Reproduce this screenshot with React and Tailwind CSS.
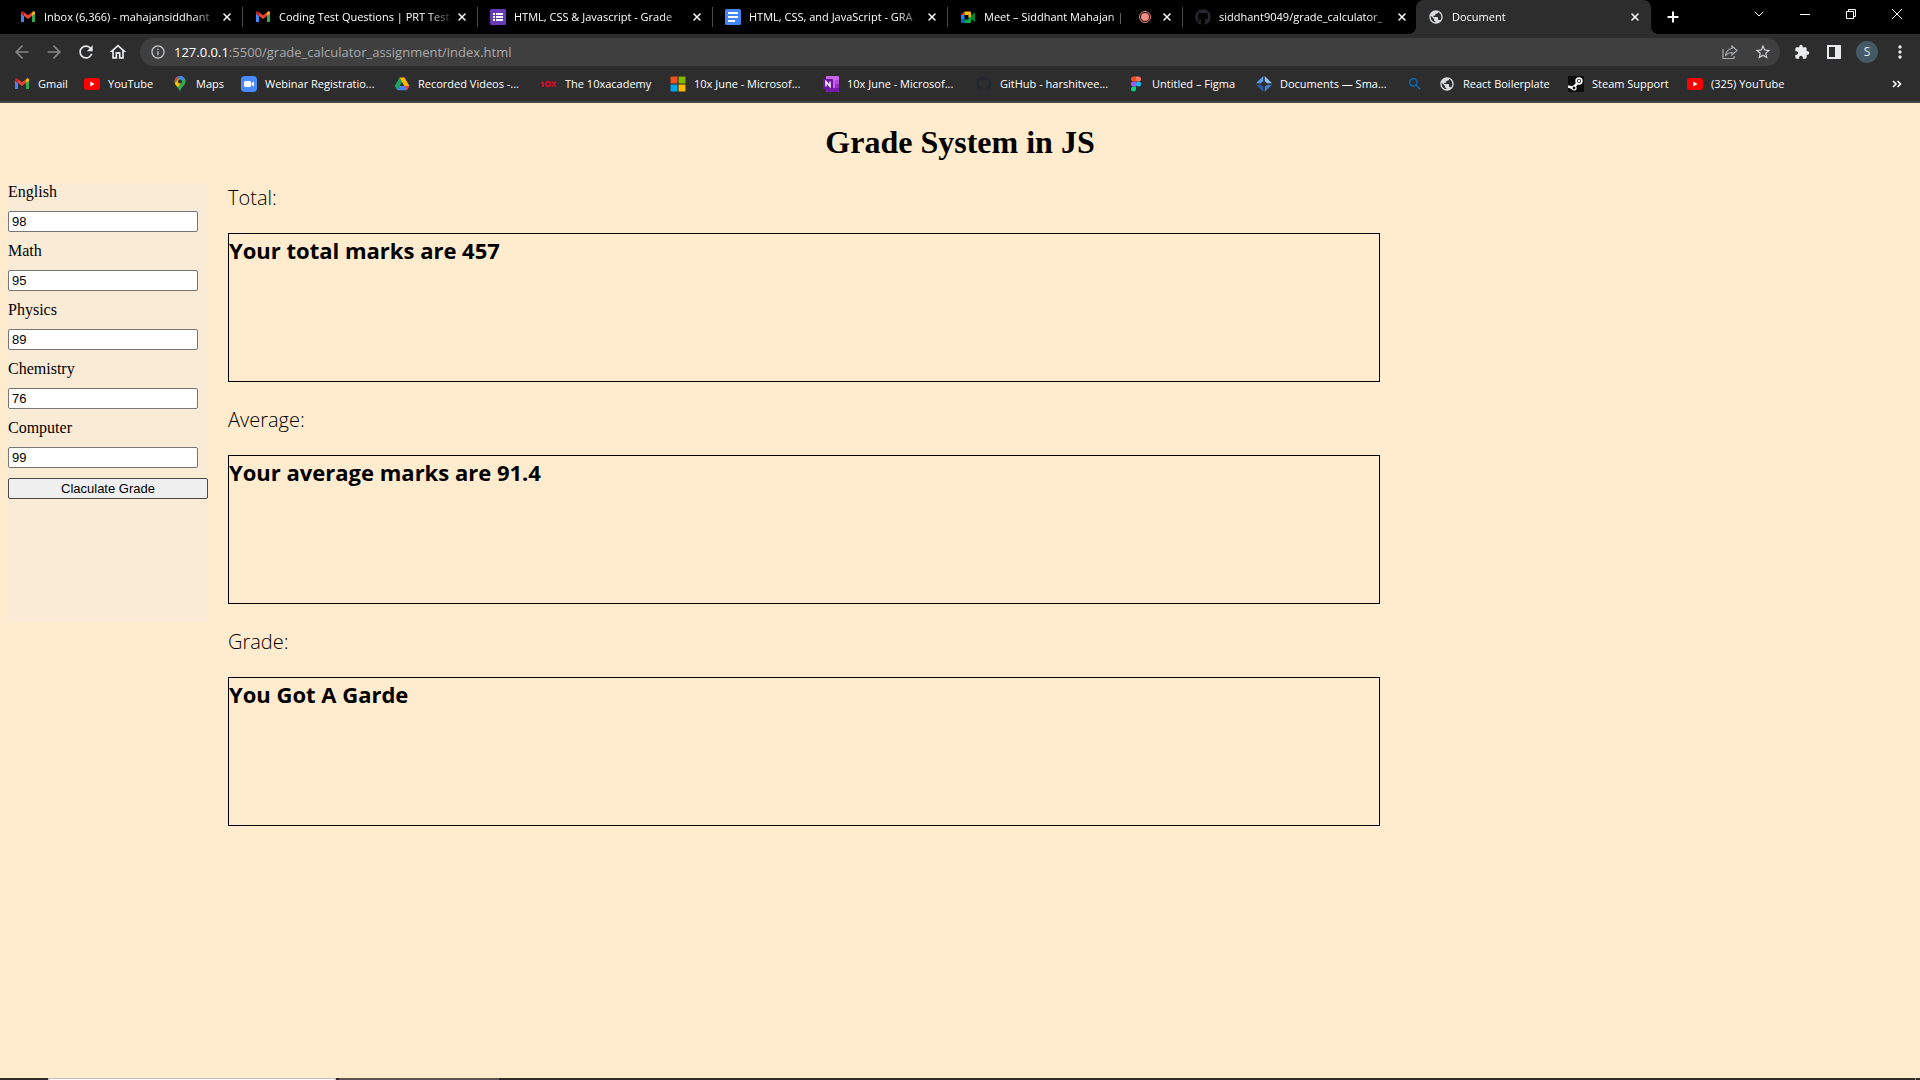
import React from "react";
import { X, Plus, ArrowLeft, ArrowRight, ChevronDown } from "lucide-react";
import { FaGithub } from "react-icons/fa";
import { MdRefresh, MdOutlineHome, MdExtension, MdMoreVert, MdStarBorder, MdPublic, MdSearch, MdInfoOutline } from "react-icons/md";

const UI = "font-['Open_Sans','Noto_Sans',sans-serif]";

const Gmail = () => (
  <svg viewBox="0 0 16 16" className="size-4 shrink-0">
    <path d="M1 4v8.4c0 .4.3.7.7.7H4V7z" fill="#4285f4" />
    <path d="M15 4v8.4c0 .4-.3.7-.7.7H12V7z" fill="#34a853" />
    <path d="M12 3.5V7l3-2.3V3.6c0-1.2-1.200-1.800-2.100-1.100z" fill="#fbbc04" />
    <path d="M4 7V3.300l4 3 4-3V7l-4 3z" fill="#ea4335" />
    <path d="M1 3.600V4.700L4 7V3.300l-.9-.8C2.200 1.800 1 2.400 1 3.600z" fill="#c5221f" />
  </svg>
);
const YouTube = () => (
  <svg viewBox="0 0 16 16" className="size-4 shrink-0">
    <rect y="2" width="16" height="12" rx="3" fill="#f00" />
    <path d="M6.300 5.600v4.800L10.500 8z" fill="#fff" />
  </svg>
);
const Maps = () => (
  <svg viewBox="0 0 16 16" className="size-4 shrink-0">
    <clipPath id="pin"><path d="M8 0a5.500 5.500 0 0 0-5.500 5.500C2.500 9.500 7 10.500 8 16c1-5.500 5.500-6.500 5.500-10.500A5.500 5.500 0 0 0 8 0z" /></clipPath>
    <g clipPath="url(#pin)">
      <rect width="16" height="16" fill="#34a853" />
      <path d="M0 0h8L2 8H0z" fill="#ea4335" />
      <path d="M6 0h10v2L8 8z" fill="#4285f4" />
      <path d="M8 6l6-5 2 2-9 11-5-6z" fill="#34a853" />
      <path d="M2 8l5-5 2 4-4 5z" fill="#fbbc04" />
      <path d="M7 0h6l-4 4z" fill="#4285f4" />
      <circle cx="8" cy="5.500" r="2" fill="#2d2d2d" />
    </g>
  </svg>
);
const Zoom = () => (
  <svg viewBox="0 0 16 16" className="size-4 shrink-0">
    <rect width="16" height="16" rx="4" fill="#4a8cff" />
    <rect x="3" y="5" width="7" height="6" rx="1.500" fill="#fff" />
    <path d="M10.500 7.200L13 5.300v5.400l-2.500-1.900z" fill="#fff" />
  </svg>
);
const Drive = () => (
  <svg viewBox="0 0 16 16" className="size-4 shrink-0">
    <path d="M5.500 1.500L8 6 3.200 14.200.7 10z" fill="#1ea362" />
    <path d="M5.500 1.500h5L15.300 10h-5z" fill="#ffba00" />
    <path d="M5.600 10h9.700l-2.500 4.200H3.200z" fill="#4285f4" />
    <path d="M12.800 14.200L10.300 10h5z" fill="#ea4335" />
  </svg>
);
const TenX = () => (
  <svg viewBox="0 0 16 16" className="size-4 shrink-0" fill="none" stroke="#c8102e" strokeWidth="2">
    <path d="M0 6.500h2V11M11 5.500l4 5M15 5.500l-4 5" />
    <circle cx="7" cy="8" r="2.200" />
  </svg>
);
const Microsoft = () => (
  <svg viewBox="0 0 16 16" className="size-4 shrink-0">
    <rect width="16" height="16" fill="#222" />
    <path d="M.5.500h7v7h-7z" fill="#f25022" />
    <path d="M8.500.500h7v7h-7z" fill="#7fba00" />
    <path d="M.5 8.500h7v7h-7z" fill="#00a4ef" />
    <path d="M8.500 8.500h7v7h-7z" fill="#ffb900" />
  </svg>
);
const OneNote = () => (
  <svg viewBox="0 0 16 16" className="size-4 shrink-0">
    <rect x="3" width="13" height="16" rx="1" fill="#ca64ea" />
    <path d="M12 4h4v4h-4z" fill="#ae4bd5" />
    <path d="M12 8h4v4h-4z" fill="#9332bf" />
    <path d="M3 12h13v3l-1 1H4l-1-1z" fill="#7719aa" />
    <rect y="3" width="10" height="10" rx="1" fill="#6a1499" />
    <path d="M3 10.500v-5l4 5v-5" fill="none" stroke="#fff" strokeWidth="1.400" />
  </svg>
);
const Figma = () => (
  <svg viewBox="0 0 16 16" className="size-4 shrink-0">
    <path d="M8 .5H5.500a2.500 2.500 0 0 0 0 5H8z" fill="#f24e1e" />
    <path d="M8 .5h2.500a2.500 2.500 0 0 1 0 5H8z" fill="#ff7262" />
    <path d="M8 5.500H5.500a2.500 2.500 0 0 0 0 5H8z" fill="#a259ff" />
    <circle cx="10.500" cy="8" r="2.500" fill="#1abcfe" />
    <path d="M8 10.500H5.500A2.500 2.500 0 1 0 8 13z" fill="#0acf83" />
  </svg>
);
const Smallpdf = () => (
  <svg viewBox="0 0 16 16" className="size-4 shrink-0">
    <path d="M7.300 0v5L5 7.300H0z" fill="#5a9bea" />
    <path d="M8.700 0v5L11 7.300h5z" fill="#8ec0fa" />
    <path d="M7.300 16v-5L5 8.700H0z" fill="#2c5a9c" />
    <path d="M8.700 16v-5L11 8.700h5z" fill="#3f7ccc" />
  </svg>
);
const Steam = () => (
  <svg viewBox="0 0 16 16" className="size-4 shrink-0">
    <rect width="16" height="16" fill="#0c0c0c" />
    <path d="M0 10.500l5 1.500 4.500-5" fill="none" stroke="#fff" strokeWidth="2.600" />
    <circle cx="11" cy="5" r="2.900" fill="#0c0c0c" stroke="#fff" strokeWidth="1.600" />
    <circle cx="11" cy="5" r="1.300" fill="#fff" />
    <circle cx="6" cy="12" r="2" fill="#0c0c0c" stroke="#fff" strokeWidth="1.200" />
  </svg>
);
const Forms = () => (
  <svg viewBox="0 0 16 16" className="size-4 shrink-0">
    <rect width="16" height="16" rx="1.500" fill="#673ab7" />
    <path d="M3 4h2v2H3zM6 4h7v2H6zM3 7h2v2H3zM6 7h7v2H6zM3 10h2v2H3zM6 10h7v2H6z" fill="#fff" />
  </svg>
);
const Docs = () => (
  <svg viewBox="0 0 16 16" className="size-4 shrink-0">
    <rect width="16" height="16" rx="1.500" fill="#4285f4" />
    <path d="M3 3h10v2H3zM3 7h10v2H3zM3 11h7v2H3z" fill="#fff" />
  </svg>
);
const Meet = () => (
  <svg viewBox="0 0 16 16" className="size-4 shrink-0">
    <path d="M4.500 2.500v3.500H1z" fill="#ea4335" />
    <path d="M1 6h3.500v4.500H1z" fill="#2684fc" />
    <path d="M1 10.500h3.500V14H2a1 1 0 0 1-1-1z" fill="#0066da" />
    <path d="M4.500 2.500H10a1 1 0 0 1 1 1V8L8.500 9V6h-4z" fill="#ffba00" />
    <path d="M4.500 10.500h4V8H11v5a1 1 0 0 1-1 1H4.500z" fill="#00ac47" />
    <path d="M11 6.500l3-2.600c.4-.3 1-.1 1 .5v7.800c0 .5-.6.800-1 .4l-3-2.500z" fill="#00832d" />
  </svg>
);
const GitHub = () => <FaGithub className="size-4 shrink-0 text-[#24292f]" />;
const Globe = () => <MdPublic className="size-4 shrink-0 text-[#dadce0]" />;
const Find = () => <MdSearch className="size-4 shrink-0 text-[#0f6cbd]" />;

const tabs = [
  { icon: Gmail, title: "Inbox (6,366) - mahajansiddhant" },
  { icon: Gmail, title: "Coding Test Questions | PRT Test" },
  { icon: Forms, title: "HTML, CSS & Javascript - Grade" },
  { icon: Docs, title: "HTML, CSS, and JavaScript - GRA" },
  { icon: Meet, title: "Meet – Siddhant Mahajan |", recording: true },
  { icon: GitHub, title: "siddhant9049/grade_calculator_" },
  { icon: Globe, title: "Document", active: true },
];

const bookmarks = [
  { icon: Gmail, title: "Gmail", width: "w-[70px]" },
  { icon: YouTube, title: "YouTube", width: "w-[88px]" },
  { icon: Maps, title: "Maps", width: "w-[69px]" },
  { icon: Zoom, title: "Webinar Registratio...", width: "w-[153px]" },
  { icon: Drive, title: "Recorded Videos -...", width: "w-[147px]" },
  { icon: TenX, title: "The 10xacademy", width: "w-[129px]" },
  { icon: Microsoft, title: "10x June - Microsof...", width: "w-[153px]" },
  { icon: OneNote, title: "10x June - Microsof...", width: "w-[153px]" },
  { icon: GitHub, title: "GitHub - harshitvee...", width: "w-[152px]" },
  { icon: Figma, title: "Untitled – Figma", width: "w-[128px]" },
  { icon: Smallpdf, title: "Documents — Sma...", width: "w-[151px]" },
  { icon: Find, title: "", width: "w-[32px]" },
  { icon: Globe, title: "React Boilerplate", width: "w-[129px]" },
  { icon: Steam, title: "Steam Support", width: "w-[119px]" },
  { icon: YouTube, title: "(325) YouTube", width: "w-[120px]" },
];

function Tab({ icon: Icon, title, recording, active }) {
  return (
    <div
      role="tab"
      aria-selected={!!active}
      className={
        active
          ? "relative -ml-0.5 flex h-full w-[235px] items-center gap-2 rounded-t-lg bg-[#2d2d2d] pr-2 pl-3"
          : "relative flex h-full w-[235px] items-center gap-2 pr-2 pl-3"
      }
    >
      {active && (
        <>
          <span className="absolute bottom-0 -left-2 size-2 bg-[radial-gradient(circle_at_0_0,#000_8px,#2d2d2d_8px)]" />
          <span className="absolute -right-2 bottom-0 size-2 bg-[radial-gradient(circle_at_100%_0,#000_8px,#2d2d2d_8px)]" />
        </>
      )}
      <Icon />
      <span className="-mr-2 min-w-0 flex-1 whitespace-nowrap mask-r-from-85%">{title}</span>
      {recording && (
        <span className="ml-2 flex size-3 shrink-0 items-center justify-center rounded-full border border-[#f28b82]">
          <span className="size-2 rounded-full bg-[#f28b82]" />
        </span>
      )}
      <button aria-label="Close tab" className="flex size-4 shrink-0 items-center justify-center">
        <X className="size-3" strokeWidth={3} />
      </button>
      {!active && <span className="absolute right-0 h-5 w-px bg-[#4a4a4a]" />}
    </div>
  );
}

function Browser() {
  return (
    <header className={`${UI} border-b-2 border-[#46484a] bg-[#2d2d2d] text-[11px] leading-4 text-white`}>
      <div className="flex h-[34px] bg-black pl-2">
        <div role="tablist" className="flex">
          {tabs.map((t) => (
            <Tab key={t.title} {...t} />
          ))}
        </div>
        <button aria-label="New tab" className="ml-3 flex w-5 items-center justify-center">
          <Plus className="size-4" strokeWidth={3} />
        </button>
        <div className="ml-auto flex h-7 items-center">
          <button aria-label="Search tabs" className="flex w-[46px] justify-center">
            <ChevronDown className="size-4" strokeWidth={1.5} />
          </button>
          <button aria-label="Minimize" className="flex w-[46px] justify-center">
            <svg viewBox="0 0 10 10" className="size-[10px]" stroke="currentColor">
              <path d="M0 5.500h10" />
            </svg>
          </button>
          <button aria-label="Restore" className="flex w-[46px] justify-center">
            <svg viewBox="0 0 10 10" className="size-[10px]" fill="none" stroke="currentColor">
              <path d="M.5 2.500h7v7h-7zM2.500 2.500v-2h7v7h-2" />
            </svg>
          </button>
          <button aria-label="Close window" className="flex w-[46px] justify-center">
            <svg viewBox="0 0 10 10" className="size-[10px]" stroke="currentColor">
              <path d="M0 0l10 10M10 0L0 10" />
            </svg>
          </button>
        </div>
      </div>

      <div className="flex h-9 items-center pr-[10px] text-[#e8eaed]">
        <div className="flex gap-3 px-3">
          <button aria-label="Back" className="flex size-5 items-center justify-center text-[#868686]">
            <ArrowLeft className="size-5" strokeWidth={2} />
          </button>
          <button aria-label="Forward" className="flex size-5 items-center justify-center text-[#868686]">
            <ArrowRight className="size-5" strokeWidth={2} />
          </button>
          <button aria-label="Reload" className="flex size-5 items-center justify-center">
            <MdRefresh className="size-5" />
          </button>
          <button aria-label="Home" className="flex size-5 items-center justify-center">
            <MdOutlineHome className="size-5" />
          </button>
        </div>
        <div className="flex h-7 flex-1 items-center gap-2 rounded-full bg-[#3f3f3f] px-2">
          <MdInfoOutline className="ml-0.5 size-4 shrink-0 text-[#bdc1c6]" />
          <div className="flex-1 text-[13px] text-[#a8abae]">
            <span className="text-white">127.0.0.1</span>:5500/grade_calculator_assignment/index.html
          </div>
          <button aria-label="Share" className="mr-2">
            <svg viewBox="0 0 16 16" className="size-4" fill="none" stroke="#a8abae" strokeWidth="1.200">
              <path d="M1 5v9.500h11V12" />
              <path d="M10 2l5 4.500-5 4.500V8.500C7 8.500 5 9.500 3.500 12 4 8 6 5 10 4.500z" />
            </svg>
          </button>
          <button aria-label="Bookmark this page">
            <MdStarBorder className="size-[18px] text-[#d0d2d5]" />
          </button>
        </div>
        <div className="flex items-center gap-3 pl-3">
          <button aria-label="Extensions" className="flex size-5 items-center justify-center">
            <MdExtension className="size-4" />
          </button>
          <button aria-label="Side panel" className="flex size-5 items-center justify-center">
            <svg viewBox="0 0 14 14" className="size-[14px]">
              <path d="M0 0h14v14H0zM2 2v10h6V2z" fill="currentColor" fillRule="evenodd" />
            </svg>
          </button>
          <button aria-label="Profile" className="flex size-[22px] items-center justify-center rounded-full bg-[#455a64] text-xs">S</button>
          <button aria-label="Menu" className="flex size-5 items-center justify-center">
            <MdMoreVert className="size-5" />
          </button>
        </div>
      </div>

      <nav aria-label="Bookmarks" className="flex h-[31px] items-center pr-[18px] pb-1 pl-[14px]">
        {bookmarks.map(({ icon: Icon, title, width }, i) => (
          <a key={i} href="#" aria-label={title || "Search"} className={`${width} flex shrink-0 items-center gap-2 whitespace-nowrap`}>
            <Icon />
            {title}
          </a>
        ))}
        <button aria-label="More bookmarks" className="ml-auto">
          <svg viewBox="0 0 10 8" className="h-2 w-[10px]" fill="none" stroke="currentColor" strokeWidth="1.600">
            <path d="M1 1l3 3-3 3M5.500 1l3 3-3 3" />
          </svg>
        </button>
      </nav>
    </header>
  );
}

const subjects = [
  ["English", "98"],
  ["Math", "95"],
  ["Physics", "89"],
  ["Chemistry", "76"],
  ["Computer", "99"],
];

const results = [
  ["Total:", "Your total marks are 457"],
  ["Average:", "Your average marks are 91.4"],
  ["Grade:", "You Got A Garde"],
];

export default function App() {
  return (
    <div className="flex min-h-screen flex-col bg-[#ffebcd] text-black">
      <Browser />
      <main className="flex-1 px-2">
        <h1 className="pt-[21px] pb-[23px] text-center font-['Liberation_Serif',serif] text-[32px] leading-9 font-bold">
          Grade System in JS
        </h1>
        <div className="flex items-start gap-5">
          <form className="flex h-[440px] w-[200px] flex-col gap-[10px] bg-[#faebd7]" onSubmit={(e) => e.preventDefault()}>
            {subjects.map(([name, mark]) => (
              <React.Fragment key={name}>
                <label htmlFor={name} className="font-['Liberation_Serif',serif] text-base leading-[18px]">
                  {name}
                </label>
                <input
                  id={name}
                  defaultValue={mark}
                  className="h-[21px] w-[190px] rounded-xs border border-[#767676] bg-white px-[3px] font-['Liberation_Sans',sans-serif] text-[13px]"
                />
              </React.Fragment>
            ))}
            <button className="h-[21px] rounded-xs border border-[#4a4a4a] bg-[#efefef] font-['Liberation_Sans',sans-serif] text-[13px] leading-[19px]">
              Claculate Grade
            </button>
          </form>
          <div className={`${UI} w-[60vw]`}>
            {results.map(([label, text]) => (
              <section key={label} className="pt-px pb-[23px]">
                <h2 className="pb-[21px] text-xl leading-7 font-light">{label}</h2>
                <div className="h-[149px] border border-black text-[22px] leading-8 font-bold">{text}</div>
              </section>
            ))}
          </div>
        </div>
      </main>
      <footer className="flex h-[2px] bg-[#332b29]">
        <span className="ml-12 w-72 border border-b-0 border-[#bdbdbd] bg-white" />
        <span className="ml-[3px] w-40 bg-[#5c5350]" />
        <span className="mr-1 ml-auto w-px bg-[#8a8583]" />
      </footer>
    </div>
  );
}
